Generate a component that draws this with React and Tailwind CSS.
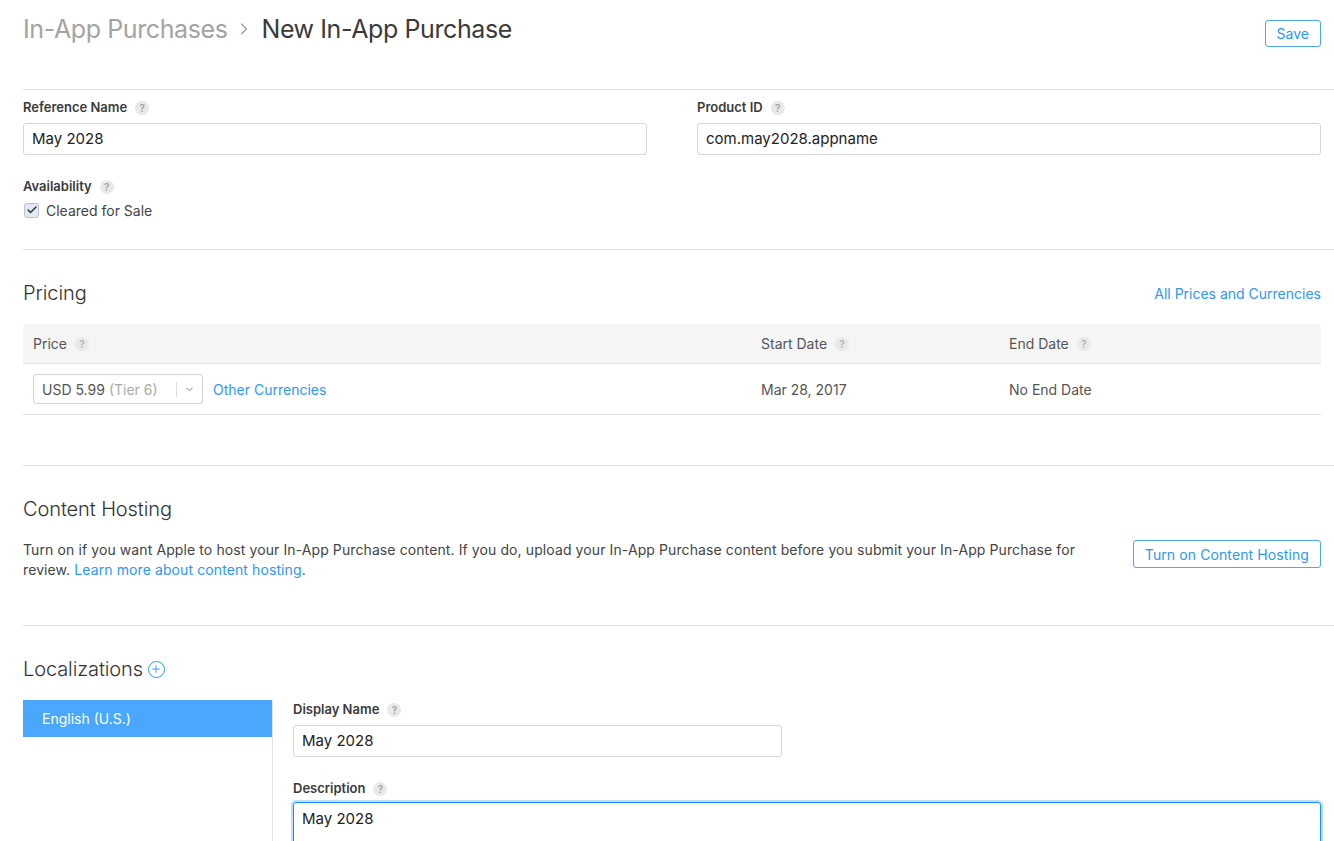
import { Check, ChevronDown, ChevronRight, Plus } from 'lucide-react';

// Small grey "?" bubble shown after field labels
function Help() {
  return (
    <span className="ml-[8px] inline-flex h-[14px] w-[14px] items-center justify-center rounded-full bg-[#e9e9e9] text-[10px] leading-none text-[#a0a0a0]">
      ?
    </span>
  );
}

function FieldLabel({ children }) {
  return (
    <div className="flex h-[16px] items-center text-[13px] font-semibold text-[#3a3a3a]">
      {children}
      <Help />
    </div>
  );
}

function TextField({ value, className = '' }) {
  return (
    <div
      className={`flex h-[32px] items-center rounded-[3px] border border-[#d6d6d6] px-[8px] text-[15px] text-[#222] ${className}`}
    >
      {value}
    </div>
  );
}

function SectionTitle({ children }) {
  return (
    <h2 className="flex h-[28px] items-center text-[20px] font-light tracking-[-0.1px] text-[#333]">{children}</h2>
  );
}

export default function App() {
  return (
    <div className="min-h-[841px] bg-white pl-[23px] font-['Inter','Liberation_Sans',sans-serif] text-[#333]">
      {/* ── Breadcrumb header ───────────────────────────── */}
      <div className="flex h-[90px] items-start justify-between border-b border-[#e3e3e3] pr-[13px]">
        <h1 className="mt-[13px] flex items-center text-[25px] leading-[32px] font-normal tracking-[-0.4px]">
          <span className="text-[#a3a3a3]">In-App Purchases</span>
          <ChevronRight className="mx-[7px] h-[20px] w-[20px] text-[#9a9a9a]" strokeWidth={1.4} />
          <span className="text-[#3a3a3a]">New In-App Purchase</span>
        </h1>
        <button className="mt-[20px] h-[27px] rounded-[3px] border border-[#4ea6f7] px-[11px] text-[14px] text-[#2d97f5]">
          Save
        </button>
      </div>

      {/* ── Identity fields ─────────────────────────────── */}
      <div className="border-b border-[#e3e3e3] pt-[10px] pb-[29px] pr-[13px]">
        <div className="grid grid-cols-2 gap-[50px]">
          <div>
            <FieldLabel>Reference Name</FieldLabel>
            <TextField value="May 2028" className="mt-[7px]" />
          </div>
          <div>
            <FieldLabel>Product ID</FieldLabel>
            <TextField value="com.may2028.appname" className="mt-[7px]" />
          </div>
        </div>
        <div className="mt-[24px]">
          <FieldLabel>Availability</FieldLabel>
          <label className="mt-[5px] flex h-[20px] items-center text-[14px] text-[#444]">
            <span className="ml-[1px] mr-[7px] flex h-[15px] w-[15px] items-center justify-center rounded-[3px] border border-[#b9c3cf] bg-[#e3eaf3]">
              <Check className="h-[12px] w-[12px] text-[#333]" strokeWidth={3} />
            </span>
            Cleared for Sale
          </label>
        </div>
      </div>

      {/* ── Pricing ─────────────────────────────────────── */}
      <div className="border-b border-[#e3e3e3] pt-[29px] pb-[50px] pr-[13px]">
        <div className="flex items-center justify-between">
          <SectionTitle>Pricing</SectionTitle>
          <a className="text-[14px] text-[#2d97f5]">All Prices and Currencies</a>
        </div>
        <div className="mt-[17px]">
          <div className="grid h-[40px] grid-cols-[728px_248px_1fr] items-center rounded-t-[5px] border-b border-[#e3e3e3] bg-[#f5f5f5] text-[14px] text-[#555]">
            <div className="flex items-center pl-[10px]">
              Price
              <Help />
            </div>
            <div className="flex items-center pl-[10px]">
              Start Date
              <Help />
            </div>
            <div className="flex items-center pl-[10px]">
              End Date
              <Help />
            </div>
          </div>
          <div className="grid h-[51px] grid-cols-[728px_248px_1fr] items-center border-b border-[#e3e3e3] text-[14px] text-[#555]">
            <div className="flex items-center pl-[10px]">
              <div className="flex h-[30px] w-[170px] items-center rounded-[3px] border border-[#d3d3d3] pl-[8px] text-[14px]">
                <span className="text-[#555]">USD 5.99</span>
                <span className="ml-[4px] text-[#ababab]">(Tier 6)</span>
                <span className="ml-auto h-[15px] w-px bg-[#dcdcdc]" />
                <ChevronDown className="mx-[7px] h-[11px] w-[11px] text-[#777]" strokeWidth={2} />
              </div>
              <a className="ml-[10px] text-[14px] text-[#2d97f5]">Other Currencies</a>
            </div>
            <div className="pl-[10px]">Mar 28, 2017</div>
            <div className="pl-[10px]">No End Date</div>
          </div>
        </div>
      </div>

      {/* ── Content hosting ─────────────────────────────── */}
      <div className="border-b border-[#e3e3e3] pt-[29px] pb-[45px] pr-[13px]">
        <SectionTitle>Content Hosting</SectionTitle>
        <div className="mt-[17px] flex items-start justify-between">
          <p className="w-[1075px] text-[14px] leading-[20px] tracking-[0.1px] text-[#444]">
            Turn on if you want Apple to host your In-App Purchase content. If you do, upload your In-App Purchase
            content before you submit your In-App Purchase for review.{' '}
            <a className="text-[#2d97f5]">Learn more about content hosting</a>.
          </p>
          <button className="h-[28px] rounded-[3px] border border-[#4ea6f7] px-[11px] text-[14px] tracking-[0.1px] text-[#2d97f5]">
            Turn on Content Hosting
          </button>
        </div>
      </div>

      {/* ── Localizations ───────────────────────────────── */}
      <div className="pt-[29px] pr-[13px]">
        <SectionTitle>
          Localizations
          <span className="ml-[5px] flex h-[17px] w-[17px] items-center justify-center rounded-full border-[1.5px] border-[#2d97f5]">
            <Plus className="h-[12px] w-[12px] text-[#2d97f5]" strokeWidth={1.8} />
          </span>
        </SectionTitle>
        <div className="mt-[17px] flex">
          <div className="w-[250px] shrink-0 border-r border-[#e3e3e3] pb-[20px]">
            <div className="flex h-[37px] items-center bg-[#49a8fd] pl-[19px] text-[14px] text-white">
              English (U.S.)
            </div>
          </div>
          <div className="flex-1 pt-[2px] pl-[20px]">
            <FieldLabel>Display Name</FieldLabel>
            <TextField value="May 2028" className="mt-[7px] w-[489px]" />
            <div className="mt-[24px]">
              <FieldLabel>Description</FieldLabel>
            </div>
            <div className="mt-[5px] h-[110px] rounded-[3px] border border-[#1a8cff] px-[8px] pt-[5px] text-[15px] text-[#222] shadow-[0_0_0_2px_rgba(70,160,255,0.35)]">
              May 2028
            </div>
          </div>
        </div>
      </div>
    </div>
  );
}
